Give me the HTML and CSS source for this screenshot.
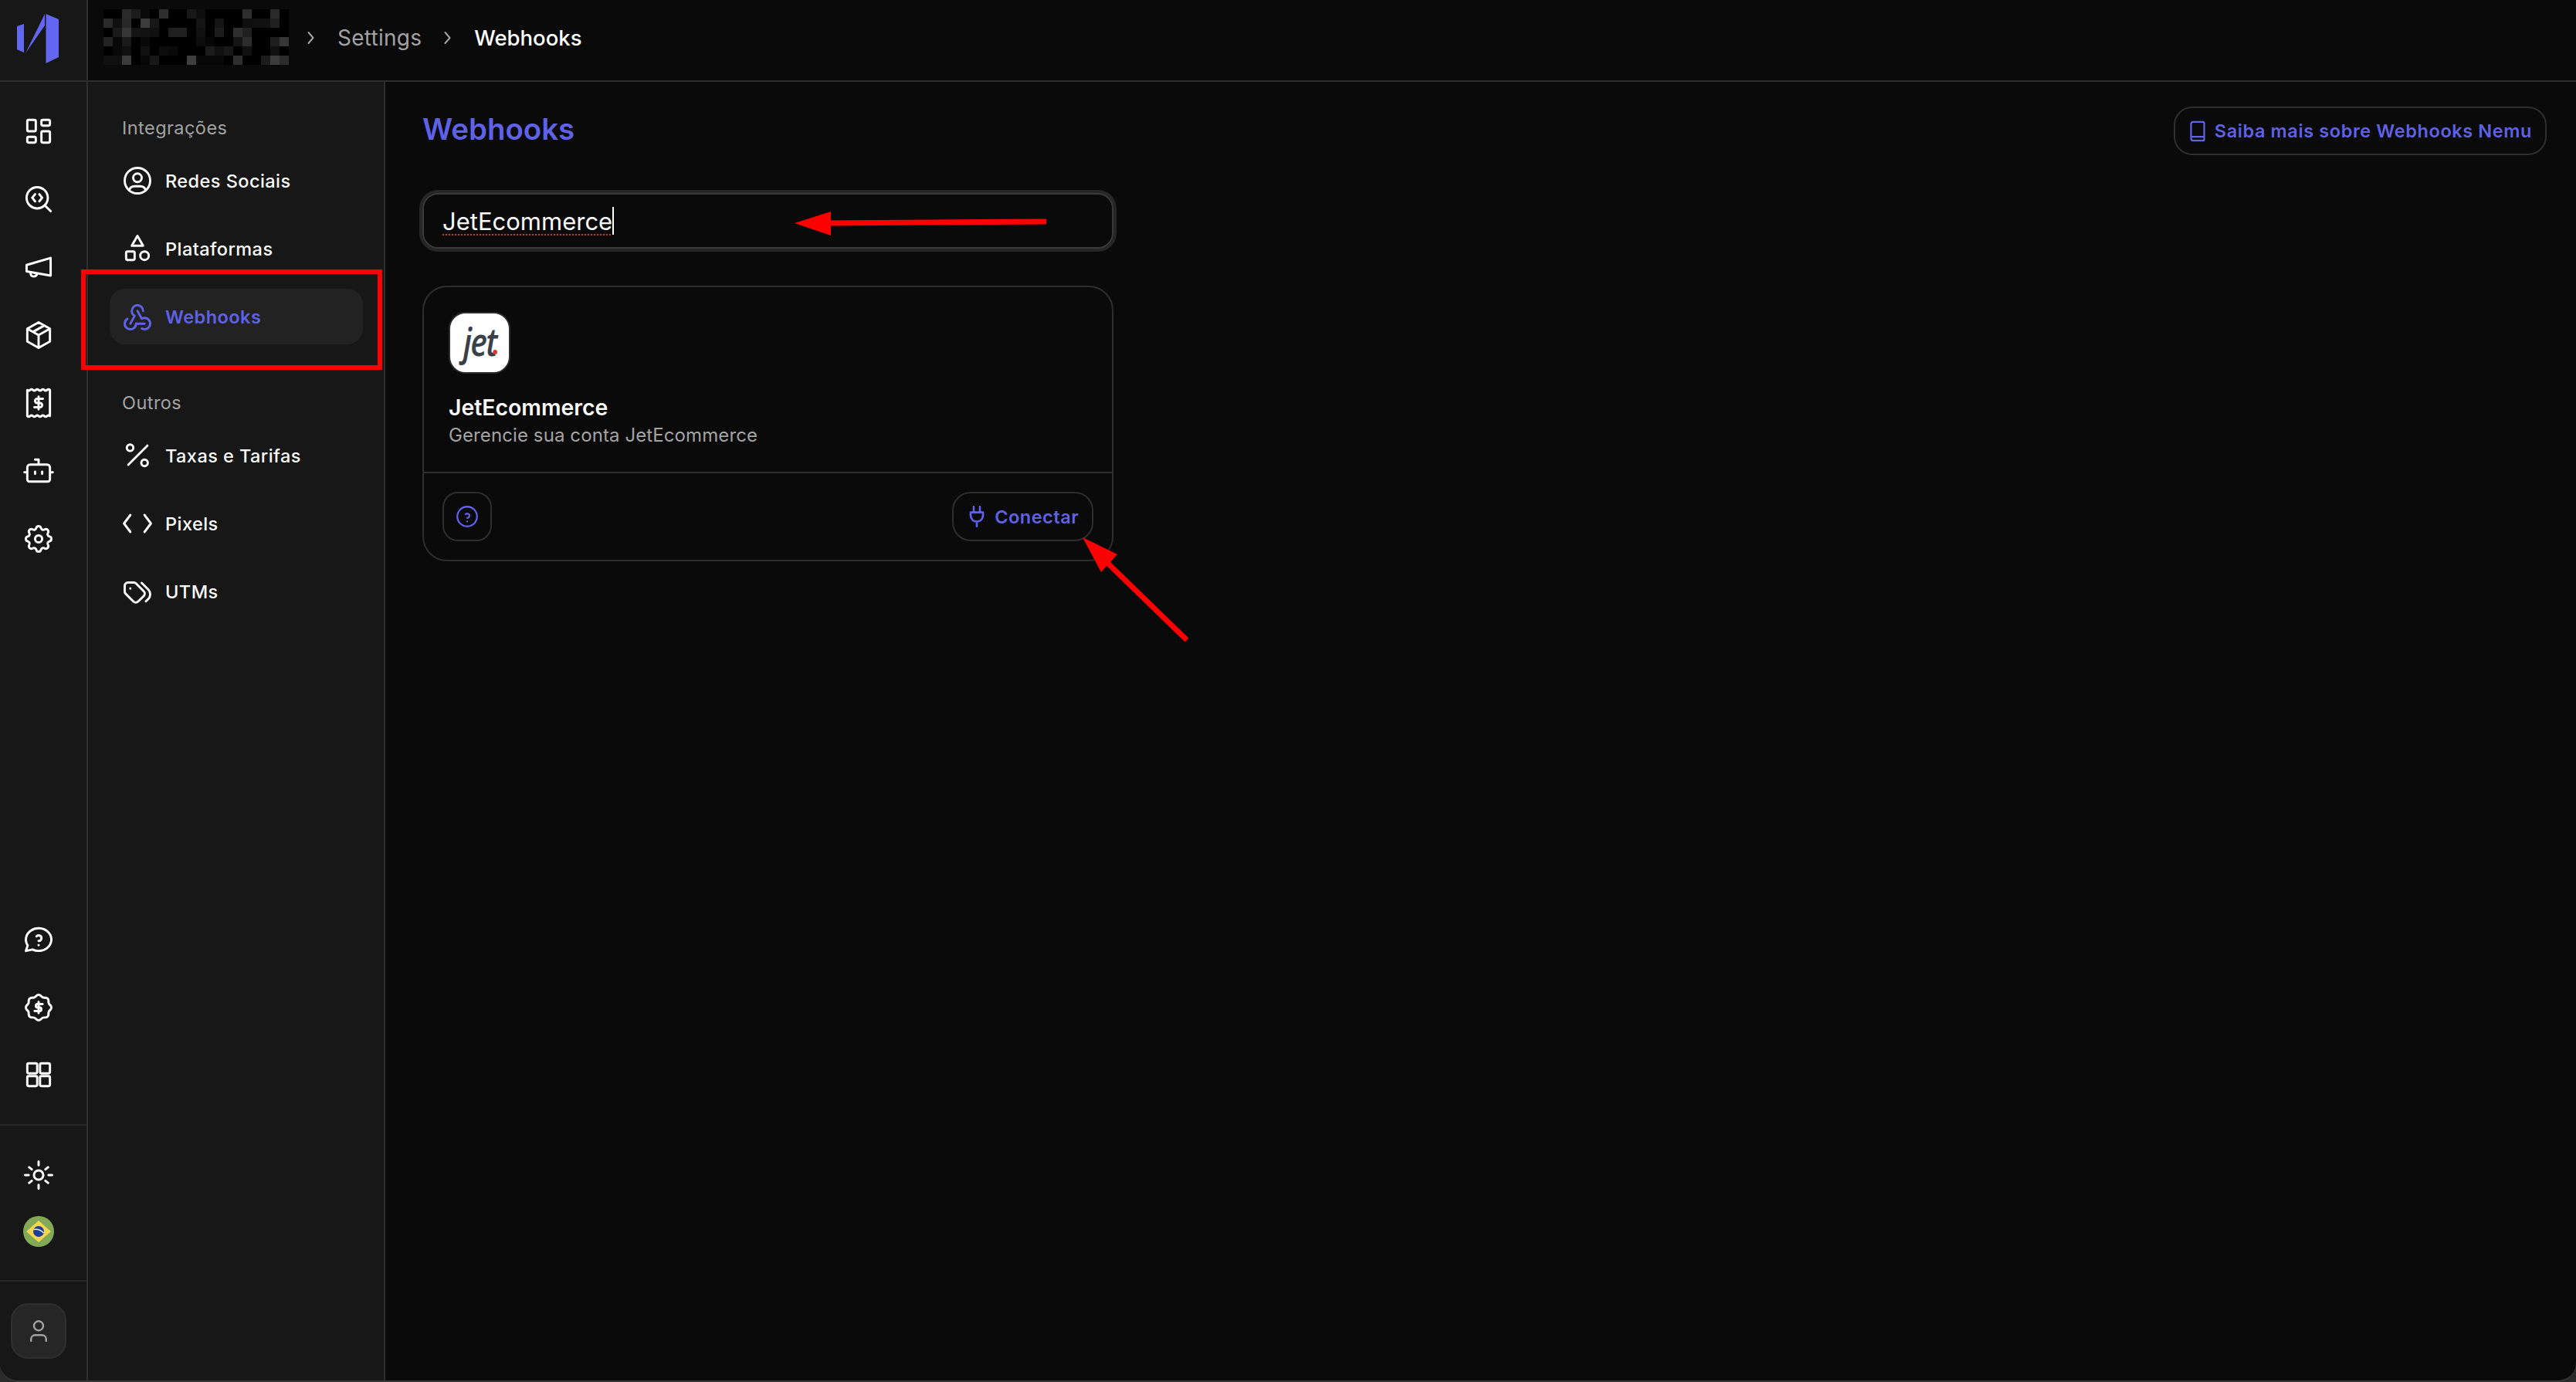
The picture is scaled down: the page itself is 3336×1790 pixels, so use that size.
FILE: index.html
```html
<!DOCTYPE html>
<html lang="pt-BR">
<head>
<meta charset="utf-8">
<title>Webhooks</title>
<link rel="stylesheet" href="styles.css">
</head>
<body>
<div class="app">
  <div class="brand">
    <svg class="logo" viewBox="0 0 112 104"><path d="M22 34l9-3v37l-9-4zM58 18v15L33 69zM59.500 18L76 25v49l-16.500 8z"/></svg>
  </div>
  <header class="topbar">
    <svg class="mosaic" viewBox="0 0 240 72" shape-rendering="crispEdges">
      <rect width="240" height="72" fill="#000"/>
      <g>
        <rect x="24" y="0" width="12" height="12" fill="#2a2a2a"/><rect x="36" y="0" width="12" height="12" fill="#1c1c1c"/><rect x="48" y="0" width="12" height="12" fill="#0a0a0a"/><rect x="72" y="0" width="12" height="12" fill="#2e2e2e"/><rect x="108" y="0" width="12" height="12" fill="#181818"/><rect x="120" y="0" width="12" height="12" fill="#0e0e0e"/><rect x="180" y="0" width="12" height="12" fill="#2e2e2e"/><rect x="216" y="0" width="12" height="12" fill="#2a2a2a"/>
        <rect x="0" y="12" width="12" height="12" fill="#2a2a2a"/><rect x="12" y="12" width="12" height="12" fill="#101010"/><rect x="24" y="12" width="12" height="12" fill="#282828"/><rect x="48" y="12" width="12" height="12" fill="#3c3c3c"/><rect x="60" y="12" width="12" height="12" fill="#181818"/><rect x="120" y="12" width="12" height="12" fill="#151515"/><rect x="144" y="12" width="12" height="12" fill="#151515"/><rect x="180" y="12" width="12" height="12" fill="#0f0f0f"/><rect x="192" y="12" width="12" height="12" fill="#101010"/><rect x="204" y="12" width="12" height="12" fill="#101010"/><rect x="216" y="12" width="12" height="12" fill="#202020"/>
        <rect x="12" y="24" width="12" height="12" fill="#1a1a1a"/><rect x="24" y="24" width="12" height="12" fill="#363636"/><rect x="36" y="24" width="12" height="12" fill="#141414"/><rect x="48" y="24" width="12" height="12" fill="#121212"/><rect x="60" y="24" width="12" height="12" fill="#101010"/><rect x="84" y="24" width="12" height="12" fill="#202020"/><rect x="96" y="24" width="12" height="12" fill="#202020"/><rect x="120" y="24" width="12" height="12" fill="#101010"/><rect x="144" y="24" width="12" height="12" fill="#1c1c1c"/><rect x="168" y="24" width="12" height="12" fill="#2e2e2e"/><rect x="180" y="24" width="12" height="12" fill="#202020"/>
        <rect x="0" y="36" width="12" height="12" fill="#222"/><rect x="12" y="36" width="12" height="12" fill="#080808"/><rect x="24" y="36" width="12" height="12" fill="#1a1a1a"/><rect x="48" y="36" width="12" height="12" fill="#080808"/><rect x="120" y="36" width="12" height="12" fill="#0c0c0c"/><rect x="132" y="36" width="12" height="12" fill="#060606"/><rect x="168" y="36" width="12" height="12" fill="#141414"/><rect x="180" y="36" width="12" height="12" fill="#2c2c2c"/><rect x="216" y="36" width="12" height="12" fill="#1e1e1e"/><rect x="228" y="36" width="12" height="12" fill="#363636"/>
        <rect x="12" y="48" width="12" height="12" fill="#080808"/><rect x="24" y="48" width="12" height="12" fill="#101010"/><rect x="48" y="48" width="12" height="12" fill="#101010"/><rect x="72" y="48" width="12" height="12" fill="#0c0c0c"/><rect x="84" y="48" width="12" height="12" fill="#0a0a0a"/><rect x="132" y="48" width="12" height="12" fill="#1c1c1c"/><rect x="144" y="48" width="12" height="12" fill="#101010"/><rect x="156" y="48" width="12" height="12" fill="#181818"/><rect x="180" y="48" width="12" height="12" fill="#101010"/><rect x="216" y="48" width="12" height="12" fill="#101010"/>
        <rect x="0" y="60" width="12" height="12" fill="#101010"/><rect x="12" y="60" width="12" height="12" fill="#101010"/><rect x="24" y="60" width="12" height="12" fill="#3c3c3c"/><rect x="48" y="60" width="12" height="12" fill="#080808"/><rect x="60" y="60" width="12" height="12" fill="#181818"/><rect x="108" y="60" width="12" height="12" fill="#3e3e3e"/><rect x="120" y="60" width="12" height="12" fill="#080808"/><rect x="132" y="60" width="12" height="12" fill="#080808"/><rect x="144" y="60" width="12" height="12" fill="#080808"/><rect x="168" y="60" width="12" height="12" fill="#2e2e2e"/><rect x="204" y="60" width="12" height="12" fill="#1c1c1c"/><rect x="216" y="60" width="12" height="12" fill="#3c3c3c"/><rect x="228" y="60" width="12" height="12" fill="#2c2c2c"/>
      </g>
    </svg>
    <nav class="crumbs">
      <svg class="chev" viewBox="0 0 10 18"><path d="M1.500 2l6 7-6 7"/></svg>
      <span class="crumb">Settings</span>
      <svg class="chev" viewBox="0 0 10 18"><path d="M1.500 2l6 7-6 7"/></svg>
      <span class="crumb crumb-current">Webhooks</span>
    </nav>
  </header>

  <aside class="rail">
    <div class="rail-group rail-main">
      <svg class="ico" viewBox="0 0 24 24"><path d="M5 4h4a1 1 0 0 1 1 1v6a1 1 0 0 1-1 1H5a1 1 0 0 1-1-1V5a1 1 0 0 1 1-1M5 16h4a1 1 0 0 1 1 1v2a1 1 0 0 1-1 1H5a1 1 0 0 1-1-1v-2a1 1 0 0 1 1-1M15 12h4a1 1 0 0 1 1 1v6a1 1 0 0 1-1 1h-4a1 1 0 0 1-1-1v-6a1 1 0 0 1 1-1M15 4h4a1 1 0 0 1 1 1v2a1 1 0 0 1-1 1h-4a1 1 0 0 1-1-1V5a1 1 0 0 1 1-1"/></svg>
      <svg class="ico" viewBox="0 0 24 24"><circle cx="11" cy="11" r="7.500"/><path d="M20.500 20.500L16.500 16.500M9.500 8.500L7.500 11l2 2.500M12.500 8.500l2 2.500-2 2.500"/></svg>
      <svg class="ico" viewBox="0 0 24 24"><path d="M20.500 5.500v12.500L3.500 15v-4.500zM6.500 15.600c-.6 1.800.6 3 2 3 1.300 0 2.200-.7 2.300-2"/></svg>
      <svg class="ico" viewBox="0 0 24 24"><path d="M12 3l8 4.500v9L12 21l-8-4.500v-9zM12 12l8-4.500M12 12v9M12 12L4 7.500M16 5.250l-8 4.500"/></svg>
      <svg class="ico" viewBox="0 0 24 24"><path d="M4 2.800q1 1 2 0t2 0 2 0 2 0 2 0 2 0 2 0 2 0v18.400q-1-1-2 0t-2 0-2 0-2 0-2 0-2 0-2 0-2 0zM15 9h-4a1.500 1.500 0 0 0 0 3h2a1.500 1.500 0 0 1 0 3H9M12 7.500v9"/></svg>
      <svg class="ico" viewBox="0 0 24 24"><path d="M6 7.500h12a2 2 0 0 1 2 2V18a1.500 1.500 0 0 1-1.500 1.500h-13A1.500 1.500 0 0 1 4 18V9.500a2 2 0 0 1 2-2zM12 7.500V4H9.500M2 13h2M20 13h2M9.500 12.500v1.500M14.500 12.500v1.500"/></svg>
      <svg class="ico" viewBox="0 0 24 24"><path d="M10.325 4.317c.426-1.756 2.924-1.756 3.35 0a1.724 1.724 0 0 0 2.573 1.066c1.543-.94 3.310.826 2.370 2.370a1.724 1.724 0 0 0 1.065 2.572c1.756.426 1.756 2.924 0 3.350a1.724 1.724 0 0 0-1.066 2.573c.94 1.543-.826 3.310-2.370 2.370a1.724 1.724 0 0 0-2.572 1.065c-.426 1.756-2.924 1.756-3.350 0a1.724 1.724 0 0 0-2.573-1.066c-1.543.94-3.310-.826-2.370-2.370a1.724 1.724 0 0 0-1.065-2.572c-1.756-.426-1.756-2.924 0-3.350a1.724 1.724 0 0 0 1.066-2.573c-.94-1.543.826-3.310 2.370-2.370 1 .608 2.296.07 2.572-1.065z"/><circle cx="12" cy="12" r="2.500"/></svg>
    </div>
    <div class="rail-group rail-help">
      <svg class="ico" viewBox="0 0 24 24"><path d="M3 20l1.300-3.900c-2.324-3.437-1.426-7.872 2.100-10.374 3.526-2.501 8.590-2.296 11.845.48 3.255 2.777 3.695 7.266 1.029 10.501-2.666 3.235-7.615 4.215-11.574 2.293L3 20M12 16v.01M12 13a2 2 0 0 0 .914-3.782 1.980 1.980 0 0 0-2.414.483"/></svg>
      <svg class="ico" viewBox="0 0 24 24"><path d="M5 7.200A2.200 2.200 0 0 1 7.200 5h1a2.200 2.200 0 0 0 1.550-.64l.7-.7a2.200 2.200 0 0 1 3.120 0l.7.7a2.200 2.200 0 0 0 1.550.64h1A2.200 2.200 0 0 1 19 7.200v1a2.200 2.200 0 0 0 .64 1.550l.7.7a2.200 2.200 0 0 1 0 3.120l-.7.7a2.200 2.200 0 0 0-.64 1.550v1a2.200 2.200 0 0 1-2.200 2.200h-1a2.200 2.200 0 0 0-1.550.64l-.7.7a2.200 2.200 0 0 1-3.120 0l-.7-.7a2.200 2.200 0 0 0-1.550-.64h-1A2.200 2.200 0 0 1 5 16.800v-1a2.200 2.200 0 0 0-.64-1.550l-.7-.7a2.200 2.200 0 0 1 0-3.120l.7-.7A2.200 2.200 0 0 0 5 8.200zM14.800 9.500h-3.800a1.300 1.300 0 0 0 0 2.500h2a1.300 1.300 0 0 1 0 2.500H9.200M12 8v8"/></svg>
      <svg class="ico" viewBox="0 0 24 24"><rect x="4" y="4" width="7" height="7" rx="1"/><rect x="13" y="4" width="7" height="7" rx="1"/><rect x="4" y="13" width="7" height="7" rx="1"/><rect x="13" y="13" width="7" height="7" rx="1"/></svg>
    </div>
    <div class="rail-group rail-prefs">
      <svg class="ico" viewBox="0 0 24 24"><circle cx="12" cy="12" r="3.300"/><path d="M2.500 12H5M19 12h2.500M12 2.500V5M12 19v2.500M5.300 6.500l1.900 1.500M18.700 6.500L16.800 8M5.300 17.500l1.900-1.500M18.700 17.500L16.800 16"/></svg>
      <svg class="flag" viewBox="0 0 40 40"><circle cx="20" cy="20" r="20" fill="#82a955"/><path d="M20 6l16 14-16 14L4 20z" fill="#f6d551"/><circle cx="20" cy="20" r="7" fill="#1d3f9c"/><path d="M13.500 17.500c5-1 9.500.5 13 4.500" fill="none" stroke="#e8e8e8" stroke-width="1.500"/></svg>
    </div>
    <div class="rail-group rail-user">
      <button class="user-btn" type="button">
        <svg class="ico ico-user" viewBox="0 0 24 24"><circle cx="12" cy="7.500" r="4"/><path d="M5.500 20.500V19a3.500 3.500 0 0 1 3.500-3.500h6a3.500 3.500 0 0 1 3.500 3.500v1.500"/></svg>
      </button>
    </div>
  </aside>

  <aside class="sidebar">
    <h3 class="side-label">Integrações</h3>
    <ul class="side-list">
      <li class="side-item"><svg class="ico" viewBox="0 0 24 24"><circle cx="12" cy="12" r="9"/><circle cx="12" cy="10" r="3"/><path d="M6.168 18.849A4 4 0 0 1 10 16h4a4 4 0 0 1 3.834 2.855"/></svg>Redes Sociais</li>
      <li class="side-item"><svg class="ico" viewBox="0 0 24 24"><path d="M12 3l-4 7h8z"/><circle cx="17" cy="17" r="3"/><rect x="4" y="14" width="6" height="6" rx="1"/></svg>Plataformas</li>
      <li class="side-item is-active"><svg class="ico" viewBox="0 0 24 24"><path d="M4.876 13.610A4 4 0 1 0 11 17h6M15.066 20.502A4 4 0 1 0 17 13c-.706 0-1.424.179-2 .5l-3-5.500M16 8a4 4 0 1 0-8 0c0 1.506.77 2.818 2 3.500L7 17"/></svg>Webhooks</li>
    </ul>
    <h3 class="side-label side-label-next">Outros</h3>
    <ul class="side-list">
      <li class="side-item"><svg class="ico" viewBox="0 0 24 24"><circle cx="6.800" cy="6.500" r="2.300"/><circle cx="17" cy="17.200" r="2.300"/><path d="M5.500 18.500L19 5"/></svg>Taxas e Tarifas</li>
      <li class="side-item"><svg class="ico" viewBox="0 0 24 24"><path d="M7 6l-4.500 6L7 18M17 6l4.500 6L17 18"/></svg>Pixels</li>
      <li class="side-item"><svg class="ico" viewBox="0 0 24 24"><path d="M3 8v4.172a2 2 0 0 0 .586 1.414l5.536 5.536a2.410 2.410 0 0 0 3.408 0l3.882-3.882a2.410 2.410 0 0 0 0-3.408L10.876 6.296A2 2 0 0 0 9.462 5.710H5.290A2.290 2.290 0 0 0 3 8zM18 19l1.592-1.592a4.820 4.820 0 0 0 0-6.816L15 6M7 10h-.01"/></svg>UTMs</li>
    </ul>
  </aside>

  <main class="main">
    <div class="page-head">
      <h1 class="page-title">Webhooks</h1>
      <a class="btn btn-docs"><svg class="ico ico-docs" viewBox="0 0 24 24"><path d="M8 3.500h9a1 1 0 0 1 1 1v15a1 1 0 0 1-1 1H8a2 2 0 0 1-2-2v-13a2 2 0 0 1 2-2zM6 17h12"/></svg>Saiba mais sobre Webhooks Nemu</a>
    </div>
    <div class="search"><span class="search-text">JetEcommerce</span><span class="caret"></span></div>
    <article class="card">
      <div class="card-body">
        <div class="card-logo"><span class="jet">jet<i class="jet-dot"></i></span></div>
        <h2 class="card-title">JetEcommerce</h2>
        <p class="card-desc">Gerencie sua conta JetEcommerce</p>
      </div>
      <div class="card-foot">
        <button class="btn btn-square" type="button"><svg class="ico ico-help" viewBox="0 0 24 24"><circle cx="12" cy="12" r="9"/><path d="M12 16.500v.01M12 13.300a2 2 0 0 0 .914-3.782 1.980 1.980 0 0 0-2.414.483"/></svg></button>
        <button class="btn btn-connect" type="button"><svg class="ico ico-plug" viewBox="0 0 24 24"><path d="M9 2.500V8M15 2.500V8M6 8h12v3a6 6 0 0 1-12 0zM12 17v4.500"/></svg>Conectar</button>
      </div>
    </article>
  </main>
</div>
<svg class="marks" viewBox="0 0 3336 1790">
  <rect class="mark-box" x="108" y="352" width="384" height="124"/>
  <path class="mark-line" d="M1070 289L1355 287"/>
  <path class="mark-head" d="M1029 289L1076 274V305z"/>
  <path class="mark-line" d="M1432 727L1537 829"/>
  <path class="mark-head" d="M1402 696L1447 718L1426 741z"/>
</svg>
</body>
</html>
```

FILE: styles.css
```css
* { box-sizing: border-box; }
html, body { margin: 0; padding: 0; height: 100%; background: #2a2a2a; overflow: hidden; }
body { font-family: Inter, "Liberation Sans", sans-serif; color: #fff; }
h1, h2, h3, p, ul { margin: 0; padding: 0; }
ul { list-style: none; }

.app {
  display: grid;
  grid-template-columns: 114px 385px 1fr;
  grid-template-rows: 106px 1fr;
  height: 1790px;
  background: #0a0a0a;
  border-bottom: 2px solid #383838;
  border-radius: 0 0 24px 24px;
  overflow: hidden;
}

.ico { width: 44px; height: 44px; flex: none; fill: none; stroke: currentColor; stroke-width: 1.6; stroke-linecap: round; stroke-linejoin: round; }

.brand { background: #171717; border-right: 2px solid #2e2e2e; border-bottom: 2px solid #2e2e2e; }
.logo { display: block; width: 112px; height: 104px; fill: #6366f1; }

.topbar { grid-column: 2 / -1; display: flex; align-items: center; padding-left: 20px; background: #0a0a0a; border-bottom: 2px solid #2e2e2e; }
.mosaic { display: block; width: 240px; height: 72px; flex: none; margin-top: -8px; }
.crumbs { display: flex; align-items: center; margin-left: 24px; margin-top: -7px; font-size: 28px; font-weight: 400; letter-spacing: .25px; color: #a3a3a3; }
.chev { width: 10px; height: 18px; flex: none; fill: none; stroke: #a3a3a3; stroke-width: 2; stroke-linecap: round; stroke-linejoin: round; }
.crumb { margin: 0 29px; }
.crumb-current { color: #fff; margin-right: 0; font-size: 27.500px; font-weight: 500; letter-spacing: 0; }

.rail { display: flex; flex-direction: column; background: #171717; border-right: 2px solid #2e2e2e; color: #fff; }
.rail-group { display: flex; flex-direction: column; align-items: center; padding-right: 12px; }
.rail-main { gap: 44px; padding-top: 42px; }
.rail-help { gap: 43.500px; margin-top: auto; padding-bottom: 42px; }
.rail-prefs { gap: 31px; padding-top: 42px; padding-bottom: 43px; border-top: 2px solid #262626; }
.rail-user { padding-top: 28px; padding-bottom: 28px; border-top: 2px solid #262626; }
.flag { display: block; width: 40px; height: 40px; }
.user-btn { display: flex; align-items: center; justify-content: center; width: 72px; height: 72px; padding: 0; background: #262626; border: 2px solid #2e2e2e; border-radius: 22px; color: #a3a3a3; }
.ico-user { width: 36px; height: 36px; }

.sidebar { padding: 44px 27px 0 28px; background: #171717; border-right: 2px solid #2e2e2e; }
.side-label { height: 32px; margin-left: 16px; font-size: 23.500px; line-height: 32px; font-weight: 400; color: #a3a3a3; letter-spacing: .45px; }
.side-label-next { margin-top: 60px; }
.side-list { display: flex; flex-direction: column; gap: 16px; margin-top: 16px; }
.side-item { display: flex; align-items: center; gap: 14px; height: 72px; padding-left: 14px; border-radius: 20px; font-size: 23.500px; font-weight: 500; color: #fafafa; letter-spacing: .45px; }
.side-item.is-active { background: #222; color: #5f61e6; font-weight: 600; }

.main { padding: 32px 38px 0 48px; }
.page-head { display: flex; justify-content: space-between; align-items: flex-start; }
.page-title { font-size: 38.400px; line-height: 58px; font-weight: 600; color: #5f61e6; }
.btn { display: flex; align-items: center; background: transparent; border: 2px solid #2e2e2e; color: #5f61e6; font-family: inherit; font-size: 23.500px; font-weight: 600; letter-spacing: .5px; }
.btn-docs { height: 63px; padding: 0 17px 0 12px; gap: 5px; border-radius: 24px; letter-spacing: .6px; }
.ico-docs { width: 34px; height: 34px; }

.search { display: flex; align-items: center; width: 895px; height: 72px; margin-top: 49px; padding-left: 24px; border: 2px solid #3a3a3a; border-radius: 20px; box-shadow: 0 0 0 4px #262626; font-size: 31px; color: #fafafa; }
.search-text { text-decoration: underline dotted #c43a32 2px; text-underline-offset: 6px; }
.caret { width: 2px; height: 36px; background: #fff; }

.card { width: 895px; margin-top: 48px; border: 2px solid #2e2e2e; border-radius: 32px; }
.card-body { padding: 32px 32px 29px; border-bottom: 2px solid #2e2e2e; }
.card-logo { display: flex; align-items: center; justify-content: center; width: 80px; height: 80px; padding-bottom: 4px; background: #fff; border: 2px solid #2e2e2e; border-radius: 22px; }
.jet { position: relative; display: block; font-family: "Open Sans", sans-serif; font-style: italic; font-weight: 600; font-size: 50px; line-height: 50px; letter-spacing: -2px; color: #3a4049; transform: scaleX(.82); }
.jet-dot { position: absolute; right: -1px; bottom: 8px; width: 7px; height: 6px; border-radius: 50%; background: #e8352c; }
.card-title { margin-top: 26px; font-size: 28.400px; line-height: 36px; font-weight: 600; color: #fafafa; }
.card-desc { font-size: 24px; line-height: 36px; letter-spacing: .1px; color: #a3a3a3; }
.card-foot { display: flex; justify-content: space-between; padding: 24px; }
.btn-square { justify-content: center; width: 64px; height: 64px; padding: 0; border-radius: 20px; }
.ico-help { width: 34px; height: 34px; }
.btn-connect { height: 64px; padding: 0 17px 0 14px; gap: 7px; border-radius: 24px; }
.ico-plug { width: 32px; height: 32px; stroke-width: 2; }

.marks { position: absolute; left: 0; top: 0; display: block; width: 3336px; height: 1790px; pointer-events: none; }
.mark-box { fill: none; stroke: #f00; stroke-width: 6; }
.mark-line { fill: none; stroke: #f00; stroke-width: 7; }
.mark-head { fill: #f00; }
```
